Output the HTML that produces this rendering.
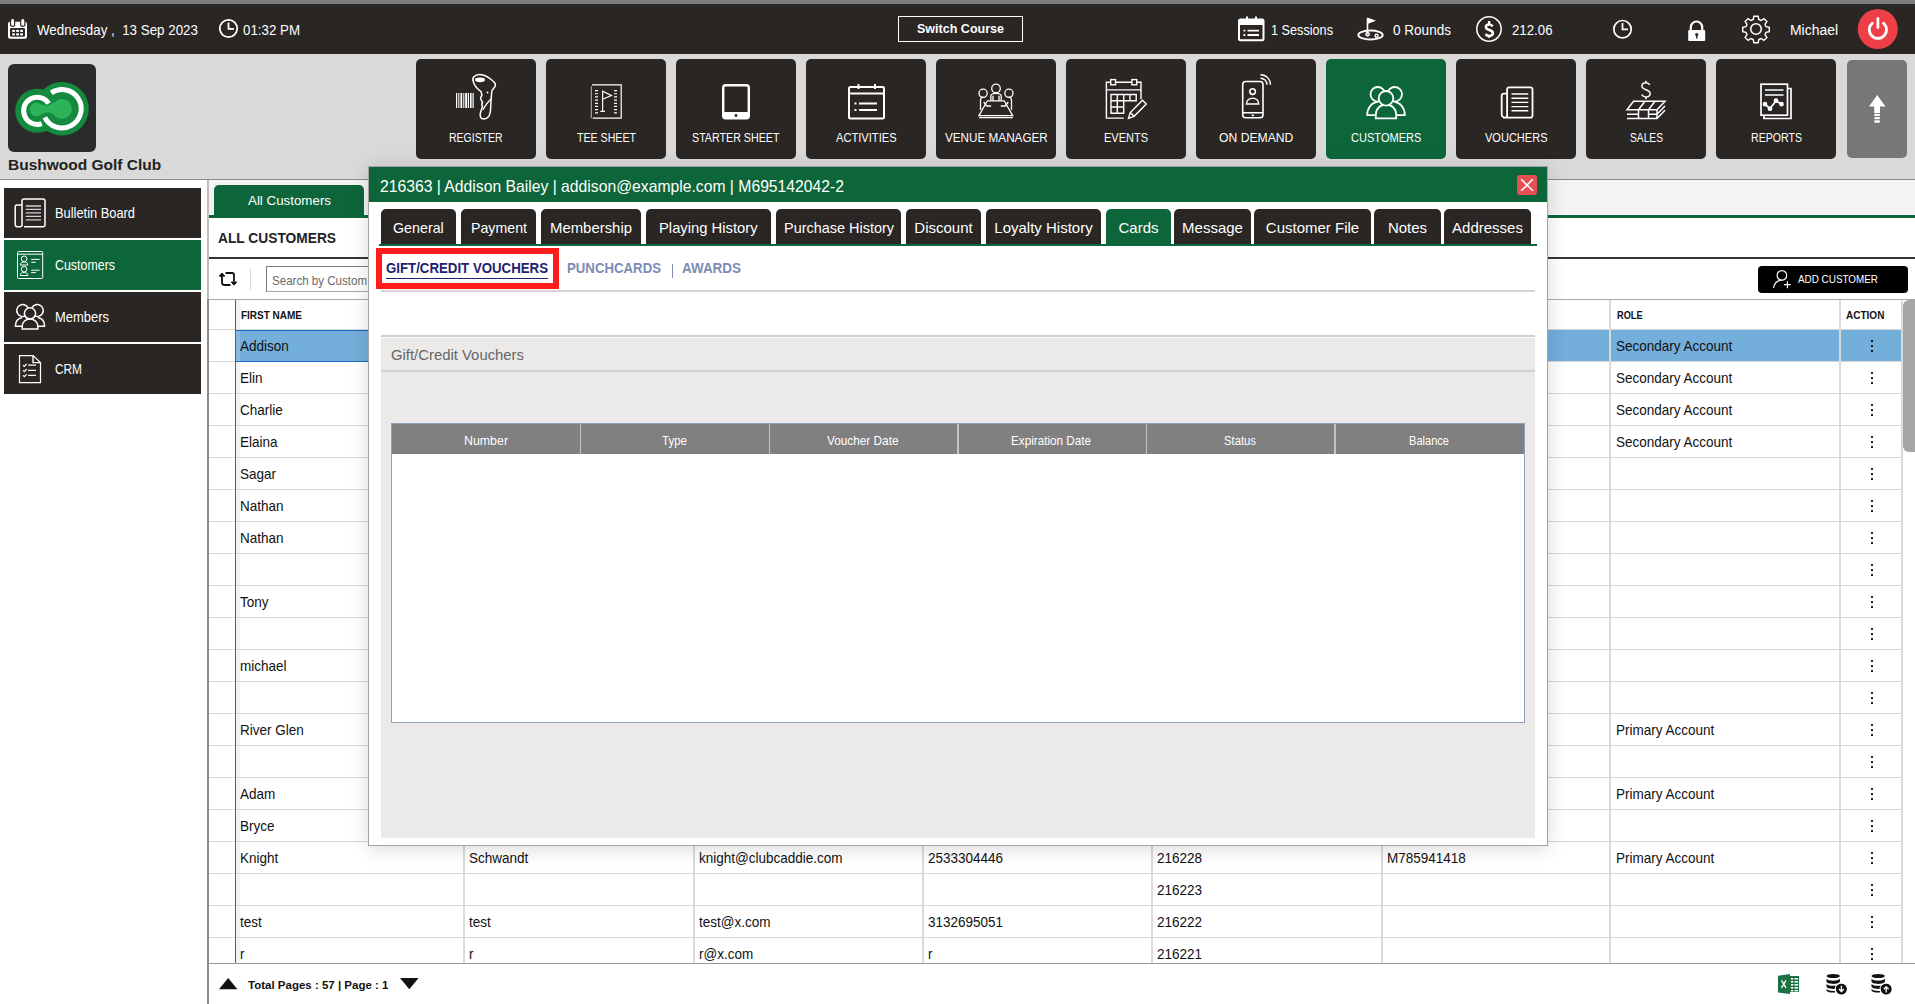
<!DOCTYPE html><html><head><meta charset='utf-8'><style>*{box-sizing:border-box;margin:0;padding:0}
html,body{width:1915px;height:1004px;overflow:hidden;background:#fff;font-family:"Liberation Sans",sans-serif}
body{position:relative}
.a{position:absolute}
.nw{white-space:pre}
.tt{position:absolute;font-size:13.5px;color:#fff;white-space:nowrap;line-height:16px}
.tile{position:absolute;width:120px;height:100px;top:59px;background:#2a2624;border-radius:5px}
.tile .lbl{position:absolute;left:0;right:0;top:73px;text-align:center;color:#fff;font-size:11.5px;letter-spacing:-0.4px;line-height:14px;white-space:nowrap}
.tile svg{position:absolute;left:0;top:0}
.sb{position:absolute;left:4px;width:197px;height:50px;background:#2a2624}
.sb .lbl{position:absolute;left:51px;top:18px;font-size:13px;color:#fff;line-height:15px;white-space:nowrap}
.sb svg{position:absolute;left:0;top:0}
.cell{position:absolute;font-size:13.5px;color:#111;white-space:nowrap;line-height:16px}
.hl{position:absolute;height:1px;background:#d4d4d4}
.vl{position:absolute;width:1px;background:#d4d4d4}
.mtab{position:absolute;top:209px;height:36px;background:#2a2624;border-radius:5px 5px 0 0;color:#fff;font-size:14.5px;line-height:18px;text-align:center;white-space:nowrap;padding-top:9px}
.th{position:absolute;top:424px;height:30px;color:#fff;font-size:12.5px;line-height:15px;text-align:center;padding-top:9px}
</style></head><body>
<div class='a' style='left:0px;top:0px;width:1915px;height:4px;background:#7d7d7d;'></div>
<div class='a' style='left:0px;top:4px;width:1915px;height:50px;background:#2a2624;'></div>
<div class='a' style='left:0px;top:54px;width:1915px;height:125px;background:#d9d9d9;'></div>
<div class='a' style='left:0px;top:179px;width:1915px;height:1px;background:#8c8c8c;'></div>
<div class='a nw' style='left:37.00px;top:16.10px;font-size:14px;line-height:28px;font-weight:400;color:#fff;transform:scaleX(0.9546);transform-origin:0 0;'>Wednesday ,  13 Sep 2023</div>
<div class='a nw' style='left:243.00px;top:16.10px;font-size:14px;line-height:28px;font-weight:400;color:#fff;transform:scaleX(0.9510);transform-origin:0 0;'>01:32 PM</div>
<div class='a' style='left:898px;top:16px;width:125px;height:26px;background:transparent;border:1.5px solid #fff'></div>
<div class='a nw' style='left:917.00px;top:16.45px;font-size:13px;line-height:26px;font-weight:700;color:#fff;transform:scaleX(0.9635);transform-origin:0 0;'>Switch Course</div>
<div class='a nw' style='left:1271.00px;top:16.10px;font-size:14px;line-height:28px;font-weight:400;color:#fff;transform:scaleX(0.9053);transform-origin:0 0;'>1 Sessions</div>
<div class='a nw' style='left:1393.00px;top:16.10px;font-size:14px;line-height:28px;font-weight:400;color:#fff;transform:scaleX(0.9677);transform-origin:0 0;'>0 Rounds</div>
<div class='a nw' style='left:1512.00px;top:16.10px;font-size:14px;line-height:28px;font-weight:400;color:#fff;transform:scaleX(0.9456);transform-origin:0 0;'>212.06</div>
<div class='a nw' style='left:1790.00px;top:16.10px;font-size:14px;line-height:28px;font-weight:400;color:#fff;transform:scaleX(0.9948);transform-origin:0 0;'>Michael</div>
<svg class="a" style="left:0;top:0" width="1915" height="54" viewBox="0 0 1915 54" fill="none" stroke="#fff">
<!-- date calendar -->
<g stroke="none">
<rect x="8" y="21.8" width="19" height="17" rx="2" fill="#fff"/>
<rect x="10" y="28" width="15" height="8.7" rx="1.2" fill="#2a2624"/>
<rect x="10.5" y="18.5" width="4.2" height="7.8" rx="2.1" fill="#fff" stroke="#2a2624" stroke-width="1.2"/>
<rect x="20.7" y="18.5" width="4.2" height="7.8" rx="2.1" fill="#fff" stroke="#2a2624" stroke-width="1.2"/>
<g fill="#fff"><rect x="12.1" y="29.7" width="2.9" height="2.4" rx=".8"/><rect x="16.1" y="29.7" width="2.9" height="2.4" rx=".8"/><rect x="20.1" y="29.7" width="2.9" height="2.4" rx=".8"/>
<rect x="12.1" y="33.2" width="2.9" height="2.4" rx=".8"/><rect x="16.1" y="33.2" width="2.9" height="2.4" rx=".8"/><rect x="20.1" y="33.2" width="2.9" height="2.4" rx=".8"/></g>
</g>
<!-- clock -->
<circle cx="228.5" cy="28.5" r="8.7" stroke-width="1.8"/>
<path d="M228.5 22.5V28.8H234" stroke-width="1.8"/>
<!-- sessions -->
<rect x="1239" y="19.5" width="24.5" height="20.8" rx="1.5" stroke-width="2"/>
<rect x="1239" y="19.5" width="24.5" height="5.5" fill="#fff" stroke="none"/>
<rect x="1246" y="16.5" width="2" height="4" fill="#fff" stroke="none"/>
<rect x="1255" y="16.5" width="2" height="4" fill="#fff" stroke="none"/>
<path d="M1243.5 30.7h1.8M1247.5 30.7h11.5M1243.5 35h1.8M1247.5 35h11.5" stroke-width="1.8"/>
<!-- golf -->
<path d="M1367.5 34.5V18" stroke-width="1.6"/>
<path d="M1367.5 17.5l8.5 3.3-8.5 3.3z" fill="#fff" stroke="none"/>
<ellipse cx="1370.5" cy="35" rx="12.2" ry="4.5" stroke-width="1.9"/>
<circle cx="1367.6" cy="34.3" r="1.7" stroke-width="1.4"/>
<circle cx="1376.6" cy="35.8" r="1.5" stroke-width="1.4"/>
<!-- dollar -->
<circle cx="1489" cy="29" r="12.2" stroke-width="1.5"/>
<path d="M1492.6 26.4c-.7-1.3-1.8-1.9-3.4-1.9-2 0-3.3 1-3.3 2.5 0 3.7 7 2.3 7 6.1 0 1.6-1.4 2.8-3.6 2.8-1.8 0-3-.7-3.7-1.9" stroke-width="2.5"/><path d="M1489.1 21v3M1489.1 35.8v2" stroke-width="2.3"/>
<!-- clock2 -->
<circle cx="1622.5" cy="29.2" r="8.7" stroke-width="1.7"/>
<path d="M1622.5 23V29.4H1628" stroke-width="1.7"/>
<!-- lock -->
<path d="M1690.8 30.5v-3.3a5.7 5.7 0 0 1 11.4 0v3.3" stroke-width="2.2"/>
<rect x="1688.2" y="30" width="17" height="11" rx="1" fill="#fff" stroke="none"/>
<circle cx="1696.7" cy="34.5" r="1.6" fill="#2a2624" stroke="none"/>
<rect x="1696" y="35" width="1.5" height="3.5" fill="#2a2624" stroke="none"/>
<!-- gear -->
<path id="gear" stroke-width="1.4" d="M1753.9 16.2h4.2l0.7 3.3 2.3 1 2.8-1.9 3 3-1.9 2.8 1 2.3 3.3 0.7v4.2l-3.3 0.7-1 2.3 1.9 2.8-3 3-2.8-1.9-2.3 1-0.7 3.3h-4.2l-0.7-3.3-2.3-1-2.8 1.9-3-3 1.9-2.8-1-2.3-3.3-0.7v-4.2l3.3-0.7 1-2.3-1.9-2.8 3-3 2.8 1.9 2.3-1z"/>
<circle cx="1756" cy="29" r="5.3" stroke-width="1.6"/>
<!-- power -->
<circle cx="1877.8" cy="29" r="20" fill="#ee3f46" stroke="none"/>
<path d="M1872.3 23.3a8.6 8.6 0 1 0 11.2 0" stroke-width="2.8" stroke-linecap="round"/>
<path d="M1877.9 18.5v9" stroke-width="2.8" stroke-linecap="round"/>
</svg>

<div class='a' style='left:8px;top:64px;width:88px;height:88px;background:#2c2b2b;border-radius:6px'></div>
<svg class="a" style="left:0;top:54px" width="110" height="110" viewBox="0 54 110 110">
<circle cx="37.2" cy="110.8" r="22" fill="#148a3f"/>
<circle cx="62" cy="108.8" r="26.8" fill="#148a3f"/>
<path d="M51.26 92.88A19.2 19.2 0 1 1 44.8 117.3" fill="none" stroke="#fff" stroke-width="5"/>
<path d="M48.67 103.49A13.6 13.6 0 1 0 41.72 123.63" fill="none" stroke="#fff" stroke-width="5"/>
<g fill="#2db35a">
<circle cx="62" cy="109" r="10"/>
<circle cx="36.5" cy="109.5" r="6.8"/>
<path d="M38 103 C44 106 48 107 54 102 L56 116 C50 111 44 112 38 116 Z"/>
</g>
</svg>

<div class='a nw' style='left:8.00px;top:149.07px;font-size:15.5px;line-height:31.0px;font-weight:700;color:#222;'>Bushwood Golf Club</div>
<div class='a' style='left:416px;top:59px;width:120px;height:100px;background:#2a2624;border-radius:5px'></div>
<div class='a nw' style='left:449.20px;top:126.12px;font-size:12.5px;line-height:25.0px;font-weight:400;color:#fff;transform:scaleX(0.8387);transform-origin:0 0;'>REGISTER</div>
<div class='a' style='left:546px;top:59px;width:120px;height:100px;background:#2a2624;border-radius:5px'></div>
<div class='a nw' style='left:576.50px;top:126.12px;font-size:12.5px;line-height:25.0px;font-weight:400;color:#fff;transform:scaleX(0.8493);transform-origin:0 0;'>TEE SHEET</div>
<div class='a' style='left:676px;top:59px;width:120px;height:100px;background:#2a2624;border-radius:5px'></div>
<div class='a nw' style='left:692.25px;top:126.12px;font-size:12.5px;line-height:25.0px;font-weight:400;color:#fff;transform:scaleX(0.8550);transform-origin:0 0;'>STARTER SHEET</div>
<div class='a' style='left:806px;top:59px;width:120px;height:100px;background:#2a2624;border-radius:5px'></div>
<div class='a nw' style='left:835.70px;top:126.12px;font-size:12.5px;line-height:25.0px;font-weight:400;color:#fff;transform:scaleX(0.8902);transform-origin:0 0;'>ACTIVITIES</div>
<div class='a' style='left:936px;top:59px;width:120px;height:100px;background:#2a2624;border-radius:5px'></div>
<div class='a nw' style='left:944.60px;top:126.12px;font-size:12.5px;line-height:25.0px;font-weight:400;color:#fff;transform:scaleX(0.9367);transform-origin:0 0;'>VENUE MANAGER</div>
<div class='a' style='left:1066px;top:59px;width:120px;height:100px;background:#2a2624;border-radius:5px'></div>
<div class='a nw' style='left:1104.00px;top:126.12px;font-size:12.5px;line-height:25.0px;font-weight:400;color:#fff;transform:scaleX(0.8797);transform-origin:0 0;'>EVENTS</div>
<div class='a' style='left:1196px;top:59px;width:120px;height:100px;background:#2a2624;border-radius:5px'></div>
<div class='a nw' style='left:1218.80px;top:126.12px;font-size:12.5px;line-height:25.0px;font-weight:400;color:#fff;transform:scaleX(0.9737);transform-origin:0 0;'>ON DEMAND</div>
<div class='a' style='left:1326px;top:59px;width:120px;height:100px;background:#0d663a;border-radius:5px'></div>
<div class='a nw' style='left:1350.80px;top:126.12px;font-size:12.5px;line-height:25.0px;font-weight:400;color:#fff;transform:scaleX(0.8840);transform-origin:0 0;'>CUSTOMERS</div>
<div class='a' style='left:1456px;top:59px;width:120px;height:100px;background:#2a2624;border-radius:5px'></div>
<div class='a nw' style='left:1484.75px;top:126.12px;font-size:12.5px;line-height:25.0px;font-weight:400;color:#fff;transform:scaleX(0.8822);transform-origin:0 0;'>VOUCHERS</div>
<div class='a' style='left:1586px;top:59px;width:120px;height:100px;background:#2a2624;border-radius:5px'></div>
<div class='a nw' style='left:1629.50px;top:126.12px;font-size:12.5px;line-height:25.0px;font-weight:400;color:#fff;transform:scaleX(0.8186);transform-origin:0 0;'>SALES</div>
<div class='a' style='left:1716px;top:59px;width:120px;height:100px;background:#2a2624;border-radius:5px'></div>
<div class='a nw' style='left:1750.50px;top:126.12px;font-size:12.5px;line-height:25.0px;font-weight:400;color:#fff;transform:scaleX(0.8471);transform-origin:0 0;'>REPORTS</div>
<div class='a' style='left:1847px;top:60px;width:60px;height:98px;background:#777777;border-radius:5px'></div>
<svg class="a" style="left:0;top:54px" width="1915" height="110" viewBox="0 54 1915 110" fill="none" stroke="#fff" stroke-width="1.6">
<!-- register -->
<g fill="#fff" stroke="none">
<rect x="456" y="93" width="1.2" height="15"/><rect x="458.3" y="93" width="1" height="15"/><rect x="460.4" y="93" width="1.8" height="15"/>
<rect x="463.3" y="93" width="1" height="15"/><rect x="465.2" y="93" width="2" height="15"/><rect x="468" y="93" width="1" height="15"/>
<rect x="470" y="93" width="1.6" height="15"/><rect x="472.5" y="93" width="1.2" height="15"/>
</g>
<path d="M473.5 82c-2-4 1-7.5 6-7.5 5 0 10 3 15 8 1.5 2 1 4-1 6l-1.5 2c-1 6-1 14-1.5 20-.5 5-3 8.5-6.5 8.5-3.5 0-4.5-3-3.5-6.5l2-6c-1-2-1-3 0-4l-1.5-3c-1-1 0-3 1-4l-1-4c-3-2-6-5-7.5-9z" stroke-width="1.5"/>
<ellipse cx="480" cy="79.8" rx="5" ry="2.4" fill="#fff" stroke="none"/>
<path d="M483 110c2-5 5-8 8-11" stroke-width="1.3"/>
<circle cx="487.5" cy="92.5" r="1" fill="#fff" stroke="none"/>
<!-- tee sheet -->
<path d="M592 84.8h29.2v33.4h-28.5" stroke-width="1.2"/>
<path d="M591.3 86.2v32" stroke-width="1" stroke="#bdbdbd"/>
<path d="M595 90.60h3M614 90.60h3M595 93.77h3M614 93.77h3M595 96.94h3M614 96.94h3M595 100.11h3M614 100.11h3M595 103.28h3M614 103.28h3M595 106.45h3M614 106.45h3M595 109.62h3M614 109.62h3M595 112.79h3M614 112.79h3" stroke-width="1.2"/>
<path d="M602.6 111.3V91.3l8.8 4.2-8.8 3.8M600.3 111.4h4.7" stroke-width="1.2"/>
<!-- starter sheet -->
<rect x="723.2" y="85.2" width="25.6" height="33" rx="2.5" stroke-width="2.4"/>
<rect x="723" y="112" width="26" height="7" rx="1.5" fill="#fff" stroke="none"/>
<circle cx="736" cy="115.5" r="1.4" fill="#2a2624" stroke="none"/>
<!-- activities -->
<rect x="849" y="87" width="35" height="31.5" rx="1.5" stroke-width="2"/>
<path d="M849 93.5h35" stroke-width="2"/>
<path d="M858.5 84v5M875 84v5" stroke-width="2"/>
<path d="M854.5 103.5h2M859 103.5h18M854.5 110h2M859 110h18" stroke-width="2"/>
<!-- venue manager -->
<g stroke-width="1.3">
<circle cx="996" cy="88.4" r="4.3"/><circle cx="983.1" cy="93.3" r="4.1"/><circle cx="1008.9" cy="93.3" r="4.1"/>
<path d="M990.8 100.8v-4.5c0-1.8 2.3-3 5.2-3s5.2 1.2 5.2 3v4.5M993 100.8v-5M999 100.8v-5"/>
<path d="M987.4 100.8h16.8l8.5 14.8h-33.8z"/>
<path d="M979.2 117.6h33.6"/>
<path d="M980.5 110V101c0-2.2 1.2-3.8 2.8-3.8M991.2 106h-4.5l-3-4"/>
<path d="M1011.5 110V101c0-2.2-1.2-3.8-2.8-3.8M1000.8 106h4.5l3-4"/>
</g>
<!-- events -->
<g stroke-width="1.4">
<path d="M1141 99.3V82.3h-34.6v35.8h17.4"/>
<path d="M1106.4 89.9h34.6"/>
<rect x="1110.7" y="79.6" width="4.8" height="5.2" fill="#2a2624"/><rect x="1131.9" y="79.6" width="4.8" height="5.2" fill="#2a2624"/>
<path d="M1111 94.5h25.2v6.3h-25.2zM1111 100.8v12.4h12.7v-12.4M1111 107h12.7M1117.3 94.5v18.7M1123.7 94.5v6.3M1130 94.5v6.3"/>
<path d="M1128.5 118.3l1.8-5.8 12.2-12.2 3.8 3.8-12.2 12.2z M1130.3 112.5l4 4"/>
</g>
<!-- on demand -->
<g stroke-width="1.6">
<rect x="1242.7" y="81.5" width="20.3" height="36.3" rx="3"/>
<path d="M1242.7 112.7h20.3M1251.8 115.4h2"/>
<circle cx="1252.6" cy="91.6" r="2.8"/>
<path d="M1246.5 104c0-3.6 2.6-5.8 6.1-5.8s6.1 2.2 6.1 5.8z"/>
<path d="M1260.5 78.2a6.5 6.5 0 0 1 6.5 6.5M1260.5 74.7a10 10 0 0 1 10 10" stroke-width="1.4"/>
</g>
<!-- customers -->
<g stroke-width="1.8" fill="#0d663a">
<path d="M1378 115.2h-10.8c0-7 4-12.3 10.5-13.5"/>
<path d="M1394 115.2h10.8c0-7-4-12.3-10.5-13.5"/>
<circle cx="1377.8" cy="94.3" r="7.3"/>
<circle cx="1394.7" cy="94.3" r="7.3"/>
<path d="M1375.8 118.3v-3.5c0-6 4.5-10.3 10.2-10.3s10.2 4.3 10.2 10.3v3.5z"/>
<circle cx="1386" cy="98.3" r="7.3"/>
</g>
<!-- vouchers -->
<g stroke-width="1.8">
<path d="M1503 117.6h27.3c1.3 0 2.2-.9 2.2-2.2v-25.9c0-1.3-.9-2.2-2.2-2.2h-21c-1.3 0-2.2.9-2.2 2.2v26c0 1.2-.9 2.1-2.1 2.1s-3.3-1-3.3-3v-18.6c0-1.4.9-2.3 2.3-2.3h3"/>
<path d="M1511.5 94h16.8M1511.5 98.2h16.8M1511.5 102.4h16.8M1511.5 106.6h16.8M1511.5 110.8h16.8" stroke-width="1.4"/>
</g>
<!-- sales -->
<g stroke-width="1.5">
<path d="M1649.8 85c-.8-1.5-2.2-2.3-3.9-2.3-2.4 0-4 1.3-4 3.2 0 4.6 8.3 3.1 8.3 7.7 0 2-1.7 3.4-4.2 3.4-1.9 0-3.4-.8-4.4-2.3M1645.9 80.8v2M1645.9 96.9v2.3"/>
<path d="M1627 109.7l6.5-8.4h31.5l-8 8.4zM1638.5 109.7l6.5-8.4M1648.5 109.7l6.5-8.4"/>
<path d="M1627 114.2h11.5M1648.5 114.2h8.5l8-8.2M1627 118.5h30l8-8.2M1638.5 109.7v8.8M1648.5 109.7v8.8M1657 109.7v8.8"/>
</g>
<!-- reports -->
<g stroke-width="1.7">
<rect x="1761" y="84.2" width="26.5" height="31"/>
<path d="M1787.5 88.5h3.5v30h-27v-3"/>
<path d="M1765 89.9h18.5M1765 94.9h18.5" stroke-width="1.5"/>
<path d="M1765 104.2l5 4.5 6-8 5.5 3.5"/>
<circle cx="1765" cy="104.2" r="1.5" fill="#fff"/><circle cx="1770" cy="108.7" r="1.5" fill="#fff"/><circle cx="1776" cy="100.7" r="1.5" fill="#fff"/><circle cx="1781.5" cy="104.2" r="1.5" fill="#fff"/>
</g>
<!-- up arrow -->
<g fill="#fff" stroke="none">
<path d="M1869 106.5L1877.2 95 1885.5 106.5h-5.5v6.5h-5.8v-6.5z"/>
<rect x="1874.2" y="113.8" width="5.8" height="2.2" rx="1"/>
<rect x="1874.2" y="117" width="5.8" height="2.2" rx="1"/>
<rect x="1874.2" y="120.2" width="5.8" height="2.6" rx="1.3"/>
</g>
</svg>

<div class='a' style='left:4px;top:188px;width:197px;height:50px;background:#2a2624;'></div>
<div class='a nw' style='left:55.00px;top:198.73px;font-size:14.5px;line-height:29.0px;font-weight:400;color:#fff;transform:scaleX(0.8861);transform-origin:0 0;'>Bulletin Board</div>
<div class='a' style='left:4px;top:240px;width:197px;height:50px;background:#0d663a;'></div>
<div class='a nw' style='left:55.00px;top:250.73px;font-size:14.5px;line-height:29.0px;font-weight:400;color:#fff;transform:scaleX(0.8558);transform-origin:0 0;'>Customers</div>
<div class='a' style='left:4px;top:292px;width:197px;height:50px;background:#2a2624;'></div>
<div class='a nw' style='left:55.00px;top:302.73px;font-size:14.5px;line-height:29.0px;font-weight:400;color:#fff;transform:scaleX(0.8935);transform-origin:0 0;'>Members</div>
<div class='a' style='left:4px;top:344px;width:197px;height:50px;background:#2a2624;'></div>
<div class='a nw' style='left:55.00px;top:354.73px;font-size:14.5px;line-height:29.0px;font-weight:400;color:#fff;transform:scaleX(0.8174);transform-origin:0 0;'>CRM</div>
<svg class="a" style="left:0;top:180px" width="210" height="220" viewBox="0 180 210 220" fill="none" stroke="#fff">
<!-- bulletin -->
<path d="M24 226.8h19c1.2 0 2-.8 2-2v-23.8c0-1.2-.8-2-2-2h-19c-1.2 0-2 .8-2 2v23.8c0 1.2-.8 2-2 2h-2.5c-1.3 0-2.3-1-2.3-2.3v-17.5c0-1.2 .8-2 2-2h4.5" stroke-width="1.5"/>
<path d="M25.8 206h15.2M25.8 209.4h15.2M25.8 212.9h15.2M25.8 216.3h15.2M25.8 219.8h15.2" stroke-width="1.3" stroke="#d0d0d0"/>
<!-- customers card -->
<g stroke-width="1">
<rect x="17.5" y="251.5" width="25.2" height="27" rx="1"/>
<path d="M17.5 254.2h25.2"/>
<circle cx="24.1" cy="258.8" r="2.8"/><path d="M20.3 265c0-2 1.6-3 3.8-3s3.8 1 3.8 3z"/>
<circle cx="24.1" cy="269.2" r="2.8"/><path d="M20.3 275.5c0-2 1.6-3 3.8-3s3.8 1 3.8 3z"/>
<path d="M31.2 259.4h8.4M31.2 262.3h4.6M31.2 270.2h8.4M31.2 272.6h4.6"/>
</g>
<!-- members -->
<g stroke-width="1.5">
<path d="M26 315.6a6 6 0 1 1 2-8"/>
<path d="M34 315.6a6 6 0 1 0-2-8"/>
<circle cx="30" cy="313.4" r="5.6"/>
<path d="M22 317.5c-4 1-6.5 3.5-6.5 8v0.7h6.5"/>
<path d="M38 317.5c4 1 6.5 3.5 6.5 8v0.7h-6.5"/>
<path d="M22.2 329v-2.5c0-4.5 3.5-7.5 7.8-7.5s7.8 3 7.8 7.5v2.5z"/>
</g>
<!-- crm -->
<g stroke-width="1.2">
<path d="M19.5 355.6h13.5l7.5 7v20h-21z"/>
<path d="M33 355.6v7h7.5" stroke-width="1.4"/>
<path d="M23 365.2l1.3 1.3 2.4-2.6M28.1 365.2h7.8M23 370.3l1.3 1.3 2.4-2.6M28.1 370.3h7.8M23 375.4l1.3 1.3 2.4-2.6M28.1 375.4h7.8"/>
</g>
</svg>

<div class='a' style='left:207px;top:180px;width:2px;height:120px;background:#bdbdbd;'></div>
<div class='a' style='left:207px;top:299px;width:2px;height:705px;background:#8a8a8a;'></div>
<div class='a' style='left:209px;top:180px;width:1706px;height:34px;background:#f3f3f3;'></div>
<div class='a' style='left:214px;top:185px;width:150px;height:31px;background:#0d663a;border-radius:5px 5px 0 0'></div>
<div class='a nw' style='left:247.50px;top:186.78px;font-size:13.5px;line-height:27.0px;font-weight:400;color:#fff;transform:scaleX(0.9877);transform-origin:0 0;'>All Customers</div>
<div class='a' style='left:209px;top:215px;width:1706px;height:3px;background:#0d663a;'></div>
<div class='a nw' style='left:218.00px;top:224.43px;font-size:14.5px;line-height:29.0px;font-weight:700;color:#222;transform:scaleX(0.9490);transform-origin:0 0;'>ALL CUSTOMERS</div>
<div class='a' style='left:209px;top:257px;width:1706px;height:2px;background:#353535;'></div>
<div class='a' style='left:250px;top:268px;width:1px;height:22px;background:#d8d8d8;'></div>
<div class='a' style='left:266px;top:266px;width:200px;height:26px;background:#fff;border:1px solid #a8a8a8;border-top-color:#7a7a7a;border-left-color:#7a7a7a'></div>
<div class='a nw' style='left:272.00px;top:267.72px;font-size:12.8px;line-height:25.6px;font-weight:400;color:#6a6a6a;transform:scaleX(0.9025);transform-origin:0 0;'>Search by Custom</div>
<div class='a' style='left:1758px;top:266px;width:150px;height:27px;background:#000;border-radius:4px'></div>
<div class='a nw' style='left:1798.00px;top:268.82px;font-size:10.5px;line-height:21.0px;font-weight:400;color:#fff;transform:scaleX(0.9413);transform-origin:0 0;'>ADD CUSTOMER</div>
<div class='a' style='left:209px;top:299px;width:1706px;height:1px;background:#a9a9a9;'></div>
<div class='a' style='left:236px;top:300px;width:4px;height:663px;background:#f2f2f2;'></div>
<div class='a' style='left:236px;top:330px;width:1665px;height:32px;background:#74aedb;'></div>
<div class='a' style='left:236px;top:331px;width:4px;height:30px;background:#88b8de;'></div>
<div class='a' style='left:209px;top:329px;width:1692px;height:1px;background:#d6d6d6;'></div>
<div class='a' style='left:209px;top:361px;width:1692px;height:1px;background:#d6d6d6;'></div>
<div class='a' style='left:209px;top:393px;width:1692px;height:1px;background:#d6d6d6;'></div>
<div class='a' style='left:209px;top:425px;width:1692px;height:1px;background:#d6d6d6;'></div>
<div class='a' style='left:209px;top:457px;width:1692px;height:1px;background:#d6d6d6;'></div>
<div class='a' style='left:209px;top:489px;width:1692px;height:1px;background:#d6d6d6;'></div>
<div class='a' style='left:209px;top:521px;width:1692px;height:1px;background:#d6d6d6;'></div>
<div class='a' style='left:209px;top:553px;width:1692px;height:1px;background:#d6d6d6;'></div>
<div class='a' style='left:209px;top:585px;width:1692px;height:1px;background:#d6d6d6;'></div>
<div class='a' style='left:209px;top:617px;width:1692px;height:1px;background:#d6d6d6;'></div>
<div class='a' style='left:209px;top:649px;width:1692px;height:1px;background:#d6d6d6;'></div>
<div class='a' style='left:209px;top:681px;width:1692px;height:1px;background:#d6d6d6;'></div>
<div class='a' style='left:209px;top:713px;width:1692px;height:1px;background:#d6d6d6;'></div>
<div class='a' style='left:209px;top:745px;width:1692px;height:1px;background:#d6d6d6;'></div>
<div class='a' style='left:209px;top:777px;width:1692px;height:1px;background:#d6d6d6;'></div>
<div class='a' style='left:209px;top:809px;width:1692px;height:1px;background:#d6d6d6;'></div>
<div class='a' style='left:209px;top:841px;width:1692px;height:1px;background:#d6d6d6;'></div>
<div class='a' style='left:209px;top:873px;width:1692px;height:1px;background:#d6d6d6;'></div>
<div class='a' style='left:209px;top:905px;width:1692px;height:1px;background:#d6d6d6;'></div>
<div class='a' style='left:209px;top:937px;width:1692px;height:1px;background:#d6d6d6;'></div>
<div class='a' style='left:463px;top:300px;width:1.6px;height:663px;background:#dadada;'></div>
<div class='a' style='left:693px;top:300px;width:1.6px;height:663px;background:#dadada;'></div>
<div class='a' style='left:922px;top:300px;width:1.6px;height:663px;background:#dadada;'></div>
<div class='a' style='left:1151px;top:300px;width:1.6px;height:663px;background:#dadada;'></div>
<div class='a' style='left:1381px;top:300px;width:1.6px;height:663px;background:#dadada;'></div>
<div class='a' style='left:1609px;top:300px;width:1.6px;height:663px;background:#dadada;'></div>
<div class='a' style='left:1839px;top:300px;width:1.6px;height:663px;background:#dadada;'></div>
<div class='a' style='left:1901px;top:300px;width:1.6px;height:663px;background:#dadada;'></div>
<div class='a' style='left:235px;top:300px;width:1px;height:663px;background:#1a6cc4;'></div>
<div class='a' style='left:236px;top:330px;width:227px;height:1px;background:#1a6cc4;'></div>
<div class='a' style='left:236px;top:361px;width:227px;height:1px;background:#1a6cc4;'></div>
<div class='a' style='left:463px;top:330px;width:1px;height:32px;background:#1a6cc4;'></div>
<div class='a nw' style='left:241.00px;top:304.82px;font-size:10.5px;line-height:21.0px;font-weight:700;color:#111;transform:scaleX(0.9506);transform-origin:0 0;'>FIRST NAME</div>
<div class='a nw' style='left:1616.50px;top:304.82px;font-size:10.5px;line-height:21.0px;font-weight:700;color:#111;transform:scaleX(0.8776);transform-origin:0 0;'>ROLE</div>
<div class='a nw' style='left:1846.00px;top:304.82px;font-size:10.5px;line-height:21.0px;font-weight:700;color:#111;transform:scaleX(0.9540);transform-origin:0 0;'>ACTION</div>
<div class='a nw' style='left:240.00px;top:331.69px;font-size:14.3px;line-height:28.6px;font-weight:400;color:#111;transform:scaleX(0.9444);transform-origin:0 0;'>Addison</div>
<div class='a nw' style='left:1616.00px;top:331.69px;font-size:14.3px;line-height:28.6px;font-weight:400;color:#111;transform:scaleX(0.9442);transform-origin:0 0;'>Secondary Account</div>
<div class='a' style='left:1870.8px;top:339.5px;width:2.2px;height:2.2px;background:#000;border-radius:0.4px'></div>
<div class='a' style='left:1870.8px;top:344.5px;width:2.2px;height:2.2px;background:#000;border-radius:0.4px'></div>
<div class='a' style='left:1870.8px;top:349.5px;width:2.2px;height:2.2px;background:#000;border-radius:0.4px'></div>
<div class='a nw' style='left:240.00px;top:363.69px;font-size:14.3px;line-height:28.6px;font-weight:400;color:#111;transform:scaleX(0.9443);transform-origin:0 0;'>Elin</div>
<div class='a nw' style='left:1616.00px;top:363.69px;font-size:14.3px;line-height:28.6px;font-weight:400;color:#111;transform:scaleX(0.9442);transform-origin:0 0;'>Secondary Account</div>
<div class='a' style='left:1870.8px;top:371.5px;width:2.2px;height:2.2px;background:#000;border-radius:0.4px'></div>
<div class='a' style='left:1870.8px;top:376.5px;width:2.2px;height:2.2px;background:#000;border-radius:0.4px'></div>
<div class='a' style='left:1870.8px;top:381.5px;width:2.2px;height:2.2px;background:#000;border-radius:0.4px'></div>
<div class='a nw' style='left:240.00px;top:395.69px;font-size:14.3px;line-height:28.6px;font-weight:400;color:#111;transform:scaleX(0.9445);transform-origin:0 0;'>Charlie</div>
<div class='a nw' style='left:1616.00px;top:395.69px;font-size:14.3px;line-height:28.6px;font-weight:400;color:#111;transform:scaleX(0.9442);transform-origin:0 0;'>Secondary Account</div>
<div class='a' style='left:1870.8px;top:403.5px;width:2.2px;height:2.2px;background:#000;border-radius:0.4px'></div>
<div class='a' style='left:1870.8px;top:408.5px;width:2.2px;height:2.2px;background:#000;border-radius:0.4px'></div>
<div class='a' style='left:1870.8px;top:413.5px;width:2.2px;height:2.2px;background:#000;border-radius:0.4px'></div>
<div class='a nw' style='left:240.00px;top:427.69px;font-size:14.3px;line-height:28.6px;font-weight:400;color:#111;transform:scaleX(0.9442);transform-origin:0 0;'>Elaina</div>
<div class='a nw' style='left:1616.00px;top:427.69px;font-size:14.3px;line-height:28.6px;font-weight:400;color:#111;transform:scaleX(0.9442);transform-origin:0 0;'>Secondary Account</div>
<div class='a' style='left:1870.8px;top:435.5px;width:2.2px;height:2.2px;background:#000;border-radius:0.4px'></div>
<div class='a' style='left:1870.8px;top:440.5px;width:2.2px;height:2.2px;background:#000;border-radius:0.4px'></div>
<div class='a' style='left:1870.8px;top:445.5px;width:2.2px;height:2.2px;background:#000;border-radius:0.4px'></div>
<div class='a nw' style='left:240.00px;top:459.69px;font-size:14.3px;line-height:28.6px;font-weight:400;color:#111;transform:scaleX(0.9443);transform-origin:0 0;'>Sagar</div>
<div class='a' style='left:1870.8px;top:467.5px;width:2.2px;height:2.2px;background:#000;border-radius:0.4px'></div>
<div class='a' style='left:1870.8px;top:472.5px;width:2.2px;height:2.2px;background:#000;border-radius:0.4px'></div>
<div class='a' style='left:1870.8px;top:477.5px;width:2.2px;height:2.2px;background:#000;border-radius:0.4px'></div>
<div class='a nw' style='left:240.00px;top:491.69px;font-size:14.3px;line-height:28.6px;font-weight:400;color:#111;transform:scaleX(0.9444);transform-origin:0 0;'>Nathan</div>
<div class='a' style='left:1870.8px;top:499.5px;width:2.2px;height:2.2px;background:#000;border-radius:0.4px'></div>
<div class='a' style='left:1870.8px;top:504.5px;width:2.2px;height:2.2px;background:#000;border-radius:0.4px'></div>
<div class='a' style='left:1870.8px;top:509.5px;width:2.2px;height:2.2px;background:#000;border-radius:0.4px'></div>
<div class='a nw' style='left:240.00px;top:523.70px;font-size:14.3px;line-height:28.6px;font-weight:400;color:#111;transform:scaleX(0.9444);transform-origin:0 0;'>Nathan</div>
<div class='a' style='left:1870.8px;top:531.5px;width:2.2px;height:2.2px;background:#000;border-radius:0.4px'></div>
<div class='a' style='left:1870.8px;top:536.5px;width:2.2px;height:2.2px;background:#000;border-radius:0.4px'></div>
<div class='a' style='left:1870.8px;top:541.5px;width:2.2px;height:2.2px;background:#000;border-radius:0.4px'></div>
<div class='a' style='left:1870.8px;top:563.5px;width:2.2px;height:2.2px;background:#000;border-radius:0.4px'></div>
<div class='a' style='left:1870.8px;top:568.5px;width:2.2px;height:2.2px;background:#000;border-radius:0.4px'></div>
<div class='a' style='left:1870.8px;top:573.5px;width:2.2px;height:2.2px;background:#000;border-radius:0.4px'></div>
<div class='a nw' style='left:240.00px;top:587.70px;font-size:14.3px;line-height:28.6px;font-weight:400;color:#111;transform:scaleX(0.9446);transform-origin:0 0;'>Tony</div>
<div class='a' style='left:1870.8px;top:595.5px;width:2.2px;height:2.2px;background:#000;border-radius:0.4px'></div>
<div class='a' style='left:1870.8px;top:600.5px;width:2.2px;height:2.2px;background:#000;border-radius:0.4px'></div>
<div class='a' style='left:1870.8px;top:605.5px;width:2.2px;height:2.2px;background:#000;border-radius:0.4px'></div>
<div class='a' style='left:1870.8px;top:627.5px;width:2.2px;height:2.2px;background:#000;border-radius:0.4px'></div>
<div class='a' style='left:1870.8px;top:632.5px;width:2.2px;height:2.2px;background:#000;border-radius:0.4px'></div>
<div class='a' style='left:1870.8px;top:637.5px;width:2.2px;height:2.2px;background:#000;border-radius:0.4px'></div>
<div class='a nw' style='left:240.00px;top:651.70px;font-size:14.3px;line-height:28.6px;font-weight:400;color:#111;transform:scaleX(0.9445);transform-origin:0 0;'>michael</div>
<div class='a' style='left:1870.8px;top:659.5px;width:2.2px;height:2.2px;background:#000;border-radius:0.4px'></div>
<div class='a' style='left:1870.8px;top:664.5px;width:2.2px;height:2.2px;background:#000;border-radius:0.4px'></div>
<div class='a' style='left:1870.8px;top:669.5px;width:2.2px;height:2.2px;background:#000;border-radius:0.4px'></div>
<div class='a' style='left:1870.8px;top:691.5px;width:2.2px;height:2.2px;background:#000;border-radius:0.4px'></div>
<div class='a' style='left:1870.8px;top:696.5px;width:2.2px;height:2.2px;background:#000;border-radius:0.4px'></div>
<div class='a' style='left:1870.8px;top:701.5px;width:2.2px;height:2.2px;background:#000;border-radius:0.4px'></div>
<div class='a nw' style='left:240.00px;top:715.70px;font-size:14.3px;line-height:28.6px;font-weight:400;color:#111;transform:scaleX(0.9443);transform-origin:0 0;'>River Glen</div>
<div class='a nw' style='left:1616.00px;top:715.70px;font-size:14.3px;line-height:28.6px;font-weight:400;color:#111;transform:scaleX(0.9443);transform-origin:0 0;'>Primary Account</div>
<div class='a' style='left:1870.8px;top:723.5px;width:2.2px;height:2.2px;background:#000;border-radius:0.4px'></div>
<div class='a' style='left:1870.8px;top:728.5px;width:2.2px;height:2.2px;background:#000;border-radius:0.4px'></div>
<div class='a' style='left:1870.8px;top:733.5px;width:2.2px;height:2.2px;background:#000;border-radius:0.4px'></div>
<div class='a' style='left:1870.8px;top:755.5px;width:2.2px;height:2.2px;background:#000;border-radius:0.4px'></div>
<div class='a' style='left:1870.8px;top:760.5px;width:2.2px;height:2.2px;background:#000;border-radius:0.4px'></div>
<div class='a' style='left:1870.8px;top:765.5px;width:2.2px;height:2.2px;background:#000;border-radius:0.4px'></div>
<div class='a nw' style='left:240.00px;top:779.70px;font-size:14.3px;line-height:28.6px;font-weight:400;color:#111;transform:scaleX(0.9444);transform-origin:0 0;'>Adam</div>
<div class='a nw' style='left:1616.00px;top:779.70px;font-size:14.3px;line-height:28.6px;font-weight:400;color:#111;transform:scaleX(0.9443);transform-origin:0 0;'>Primary Account</div>
<div class='a' style='left:1870.8px;top:787.5px;width:2.2px;height:2.2px;background:#000;border-radius:0.4px'></div>
<div class='a' style='left:1870.8px;top:792.5px;width:2.2px;height:2.2px;background:#000;border-radius:0.4px'></div>
<div class='a' style='left:1870.8px;top:797.5px;width:2.2px;height:2.2px;background:#000;border-radius:0.4px'></div>
<div class='a nw' style='left:240.00px;top:811.70px;font-size:14.3px;line-height:28.6px;font-weight:400;color:#111;transform:scaleX(0.9444);transform-origin:0 0;'>Bryce</div>
<div class='a' style='left:1870.8px;top:819.5px;width:2.2px;height:2.2px;background:#000;border-radius:0.4px'></div>
<div class='a' style='left:1870.8px;top:824.5px;width:2.2px;height:2.2px;background:#000;border-radius:0.4px'></div>
<div class='a' style='left:1870.8px;top:829.5px;width:2.2px;height:2.2px;background:#000;border-radius:0.4px'></div>
<div class='a nw' style='left:240.00px;top:843.70px;font-size:14.3px;line-height:28.6px;font-weight:400;color:#111;transform:scaleX(0.9441);transform-origin:0 0;'>Knight</div>
<div class='a nw' style='left:469.00px;top:843.70px;font-size:14.3px;line-height:28.6px;font-weight:400;color:#111;transform:scaleX(0.9443);transform-origin:0 0;'>Schwandt</div>
<div class='a nw' style='left:699.00px;top:843.70px;font-size:14.3px;line-height:28.6px;font-weight:400;color:#111;transform:scaleX(0.9442);transform-origin:0 0;'>knight@clubcaddie.com</div>
<div class='a nw' style='left:928.00px;top:843.70px;font-size:14.3px;line-height:28.6px;font-weight:400;color:#111;transform:scaleX(0.9444);transform-origin:0 0;'>2533304446</div>
<div class='a nw' style='left:1157.00px;top:843.70px;font-size:14.3px;line-height:28.6px;font-weight:400;color:#111;transform:scaleX(0.9443);transform-origin:0 0;'>216228</div>
<div class='a nw' style='left:1387.00px;top:843.70px;font-size:14.3px;line-height:28.6px;font-weight:400;color:#111;transform:scaleX(0.9442);transform-origin:0 0;'>M785941418</div>
<div class='a nw' style='left:1616.00px;top:843.70px;font-size:14.3px;line-height:28.6px;font-weight:400;color:#111;transform:scaleX(0.9443);transform-origin:0 0;'>Primary Account</div>
<div class='a' style='left:1870.8px;top:851.5px;width:2.2px;height:2.2px;background:#000;border-radius:0.4px'></div>
<div class='a' style='left:1870.8px;top:856.5px;width:2.2px;height:2.2px;background:#000;border-radius:0.4px'></div>
<div class='a' style='left:1870.8px;top:861.5px;width:2.2px;height:2.2px;background:#000;border-radius:0.4px'></div>
<div class='a nw' style='left:1157.00px;top:875.70px;font-size:14.3px;line-height:28.6px;font-weight:400;color:#111;transform:scaleX(0.9443);transform-origin:0 0;'>216223</div>
<div class='a' style='left:1870.8px;top:883.5px;width:2.2px;height:2.2px;background:#000;border-radius:0.4px'></div>
<div class='a' style='left:1870.8px;top:888.5px;width:2.2px;height:2.2px;background:#000;border-radius:0.4px'></div>
<div class='a' style='left:1870.8px;top:893.5px;width:2.2px;height:2.2px;background:#000;border-radius:0.4px'></div>
<div class='a nw' style='left:240.00px;top:907.70px;font-size:14.3px;line-height:28.6px;font-weight:400;color:#111;transform:scaleX(0.9444);transform-origin:0 0;'>test</div>
<div class='a nw' style='left:469.00px;top:907.70px;font-size:14.3px;line-height:28.6px;font-weight:400;color:#111;transform:scaleX(0.9444);transform-origin:0 0;'>test</div>
<div class='a nw' style='left:699.00px;top:907.70px;font-size:14.3px;line-height:28.6px;font-weight:400;color:#111;transform:scaleX(0.9443);transform-origin:0 0;'>test@x.com</div>
<div class='a nw' style='left:928.00px;top:907.70px;font-size:14.3px;line-height:28.6px;font-weight:400;color:#111;transform:scaleX(0.9444);transform-origin:0 0;'>3132695051</div>
<div class='a nw' style='left:1157.00px;top:907.70px;font-size:14.3px;line-height:28.6px;font-weight:400;color:#111;transform:scaleX(0.9443);transform-origin:0 0;'>216222</div>
<div class='a' style='left:1870.8px;top:915.5px;width:2.2px;height:2.2px;background:#000;border-radius:0.4px'></div>
<div class='a' style='left:1870.8px;top:920.5px;width:2.2px;height:2.2px;background:#000;border-radius:0.4px'></div>
<div class='a' style='left:1870.8px;top:925.5px;width:2.2px;height:2.2px;background:#000;border-radius:0.4px'></div>
<div class='a nw' style='left:240.00px;top:939.70px;font-size:14.3px;line-height:28.6px;font-weight:400;color:#111;transform:scaleX(0.9443);transform-origin:0 0;'>r</div>
<div class='a nw' style='left:469.00px;top:939.70px;font-size:14.3px;line-height:28.6px;font-weight:400;color:#111;transform:scaleX(0.9443);transform-origin:0 0;'>r</div>
<div class='a nw' style='left:699.00px;top:939.70px;font-size:14.3px;line-height:28.6px;font-weight:400;color:#111;transform:scaleX(0.9445);transform-origin:0 0;'>r@x.com</div>
<div class='a nw' style='left:928.00px;top:939.70px;font-size:14.3px;line-height:28.6px;font-weight:400;color:#111;transform:scaleX(0.9443);transform-origin:0 0;'>r</div>
<div class='a nw' style='left:1157.00px;top:939.70px;font-size:14.3px;line-height:28.6px;font-weight:400;color:#111;transform:scaleX(0.9443);transform-origin:0 0;'>216221</div>
<div class='a' style='left:1870.8px;top:947.5px;width:2.2px;height:2.2px;background:#000;border-radius:0.4px'></div>
<div class='a' style='left:1870.8px;top:952.5px;width:2.2px;height:2.2px;background:#000;border-radius:0.4px'></div>
<div class='a' style='left:1870.8px;top:957.5px;width:2.2px;height:2.2px;background:#000;border-radius:0.4px'></div>
<div class='a' style='left:1903px;top:300px;width:12px;height:152px;background:#a6a6a6;border-radius:6px 0 0 6px'></div>
<div class='a' style='left:209px;top:963px;width:1706px;height:1px;background:#9a9a9a;'></div>
<div class='a' style='left:209px;top:964px;width:1706px;height:40px;background:#fff;'></div>
<div class='a nw' style='left:248.00px;top:974.48px;font-size:11.5px;line-height:23.0px;font-weight:700;color:#111;'>Total Pages : 57 | Page : 1</div>
<svg class="a" style="left:0;top:0" width="1915" height="1004" viewBox="0 0 1915 1004" fill="none" stroke="#111">
<!-- refresh -->
<g stroke-width="1.8" stroke="#111">
<path d="M222 276v6.5c0 1.5 1 2.5 2.5 2.5h6"/>
<path d="M225.5 273h6.5c1.3 0 2 .8 2 2v6.5"/>
</g>
<path d="M219.2 276.2L222 273l2.8 3.2z" fill="#111" stroke="#111" stroke-width="1"/>
<path d="M231.2 282L234 285.2l2.8-3.2z" fill="#111" stroke="#111" stroke-width="1"/>
<!-- add customer icon -->
<g stroke="#fff" stroke-width="1.2">
<circle cx="1781.9" cy="275.4" r="4.8"/>
<path d="M1773.6 288c.5-4.5 3.5-7.5 8-8"/>
<path d="M1787.4 281.2v7M1783.9 284.7h7"/>
</g>
<!-- pagination triangles -->
<path d="M219 989.2L228.2 978 237.4 989.2z" fill="#111" stroke="none"/>
<path d="M400 978L418.6 978 409.3 989.2z" fill="#111" stroke="none"/>
<!-- excel -->
<path d="M1778 975.8L1790 974v20l-12-1.6z" fill="#1d7044" stroke="none"/>
<rect x="1790" y="976" width="9" height="16" fill="#1d7044" stroke="none"/>
<g fill="#fff" stroke="none">
<rect x="1791" y="978" width="2.3" height="1.6"/><rect x="1794.5" y="978" width="3.5" height="1.6"/>
<rect x="1791" y="981" width="2.3" height="1.6"/><rect x="1794.5" y="981" width="3.5" height="1.6"/>
<rect x="1791" y="984" width="2.3" height="1.6"/><rect x="1794.5" y="984" width="3.5" height="1.6"/>
<rect x="1791" y="987" width="2.3" height="1.6"/><rect x="1794.5" y="987" width="3.5" height="1.6"/>
<rect x="1791" y="990" width="2.3" height="1.4"/><rect x="1794.5" y="990" width="3.5" height="1.4"/>
</g>
<path d="M1781.5 980.3l4.5 7.5M1786 980.3l-4.5 7.5" stroke="#fff" stroke-width="1.3"/>
<!-- db down -->
<g fill="#111" stroke="none">
<ellipse cx="1833.2" cy="976" rx="6.7" ry="2.1"/>
<path d="M1826.5 978.3c0 1.3 3 2.4 6.7 2.4s6.7-1.1 6.7-2.4v3.2c0 1.3-3 2.4-6.7 2.4s-6.7-1.1-6.7-2.4z"/>
<path d="M1826.5 983.4c0 1.3 3 2.4 6.7 2.4s6.7-1.1 6.7-2.4v3.2c0 1.3-3 2.4-6.7 2.4s-6.7-1.1-6.7-2.4z"/>
<path d="M1826.5 988.5c0 1.3 3 2.4 6.7 2.4h2v1.6c-.6.1-1.3.1-2 .1-3.7 0-6.7-1.1-6.7-2.4z"/>
<circle cx="1841.4" cy="989.1" r="5.6"/>
<ellipse cx="1878.2" cy="976" rx="6.7" ry="2.1"/>
<path d="M1871.5 978.3c0 1.3 3 2.4 6.7 2.4s6.7-1.1 6.7-2.4v3.2c0 1.3-3 2.4-6.7 2.4s-6.7-1.1-6.7-2.4z"/>
<path d="M1871.5 983.4c0 1.3 3 2.4 6.7 2.4s6.7-1.1 6.7-2.4v3.2c0 1.3-3 2.4-6.7 2.4s-6.7-1.1-6.7-2.4z"/>
<path d="M1871.5 988.5c0 1.3 3 2.4 6.7 2.4h2v1.6c-.6.1-1.3.1-2 .1-3.7 0-6.7-1.1-6.7-2.4z"/>
<circle cx="1886.2" cy="989.1" r="5.6"/>
</g>
<circle cx="1841.4" cy="989.1" r="6.2" stroke="#fff" stroke-width="1"/>
<circle cx="1886.2" cy="989.1" r="6.2" stroke="#fff" stroke-width="1"/>
<path d="M1841.4 985.8v5.5M1839 989l2.4 2.6 2.4-2.6" stroke="#fff" stroke-width="1.3"/>
<path d="M1886.2 992.4v-5.5M1883.8 989.2l2.4-2.6 2.4 2.6" stroke="#fff" stroke-width="1.3"/>
</svg>

<div class='a' style='left:368px;top:166px;width:1180px;height:680px;background:#fff;border:1px solid #a3a3a3;box-shadow:0 3px 18px rgba(0,0,0,0.15)'></div>
<div class='a' style='left:369px;top:167px;width:1178px;height:35px;background:#0d663a;'></div>
<div class='a nw' style='left:379.50px;top:169.72px;font-size:16.5px;line-height:33.0px;font-weight:400;color:#fff;transform:scaleX(0.9521);transform-origin:0 0;'>216363 | Addison Bailey | addison@example.com | M695142042-2</div>
<div class='a' style='left:1517px;top:175px;width:20px;height:20px;background:#e85055;border-radius:3px'></div>
<div class='a' style='left:381px;top:209px;width:75px;height:36px;background:#2a2624;border-radius:5px 5px 0 0'></div>
<div class='a nw' style='left:393.10px;top:212.95px;font-size:15px;line-height:30px;font-weight:400;color:#fff;transform:scaleX(0.9518);transform-origin:0 0;'>General</div>
<div class='a' style='left:461px;top:209px;width:75px;height:36px;background:#2a2624;border-radius:5px 5px 0 0'></div>
<div class='a nw' style='left:470.50px;top:212.95px;font-size:15px;line-height:30px;font-weight:400;color:#fff;transform:scaleX(0.9459);transform-origin:0 0;'>Payment</div>
<div class='a' style='left:541px;top:209px;width:100px;height:36px;background:#2a2624;border-radius:5px 5px 0 0'></div>
<div class='a nw' style='left:550.00px;top:212.95px;font-size:15px;line-height:30px;font-weight:400;color:#fff;transform:scaleX(0.9936);transform-origin:0 0;'>Membership</div>
<div class='a' style='left:646px;top:209px;width:125px;height:36px;background:#2a2624;border-radius:5px 5px 0 0'></div>
<div class='a nw' style='left:659.20px;top:212.95px;font-size:15px;line-height:30px;font-weight:400;color:#fff;transform:scaleX(0.9855);transform-origin:0 0;'>Playing History</div>
<div class='a' style='left:776px;top:209px;width:125px;height:36px;background:#2a2624;border-radius:5px 5px 0 0'></div>
<div class='a nw' style='left:783.50px;top:212.95px;font-size:15px;line-height:30px;font-weight:400;color:#fff;transform:scaleX(0.9631);transform-origin:0 0;'>Purchase History</div>
<div class='a' style='left:906px;top:209px;width:75px;height:36px;background:#2a2624;border-radius:5px 5px 0 0'></div>
<div class='a nw' style='left:914.32px;top:212.95px;font-size:15px;line-height:30px;font-weight:400;color:#fff;'>Discount</div>
<div class='a' style='left:986px;top:209px;width:115px;height:36px;background:#2a2624;border-radius:5px 5px 0 0'></div>
<div class='a nw' style='left:994.31px;top:212.95px;font-size:15px;line-height:30px;font-weight:400;color:#fff;'>Loyalty History</div>
<div class='a' style='left:1106px;top:209px;width:65px;height:36px;background:#0d663a;border-radius:5px 5px 0 0'></div>
<div class='a nw' style='left:1118.49px;top:212.95px;font-size:15px;line-height:30px;font-weight:400;color:#fff;'>Cards</div>
<div class='a' style='left:1174px;top:209px;width:77px;height:36px;background:#2a2624;border-radius:5px 5px 0 0'></div>
<div class='a nw' style='left:1182.06px;top:212.95px;font-size:15px;line-height:30px;font-weight:400;color:#fff;'>Message</div>
<div class='a' style='left:1254px;top:209px;width:117px;height:36px;background:#2a2624;border-radius:5px 5px 0 0'></div>
<div class='a nw' style='left:1265.82px;top:212.95px;font-size:15px;line-height:30px;font-weight:400;color:#fff;'>Customer File</div>
<div class='a' style='left:1374px;top:209px;width:67px;height:36px;background:#2a2624;border-radius:5px 5px 0 0'></div>
<div class='a nw' style='left:1387.91px;top:212.95px;font-size:15px;line-height:30px;font-weight:400;color:#fff;'>Notes</div>
<div class='a' style='left:1444px;top:209px;width:87px;height:36px;background:#2a2624;border-radius:5px 5px 0 0'></div>
<div class='a nw' style='left:1452.06px;top:212.95px;font-size:15px;line-height:30px;font-weight:400;color:#fff;'>Addresses</div>
<div class='a' style='left:379px;top:244px;width:1158px;height:2px;background:#0d663a;'></div>
<div class='a' style='left:376px;top:248px;width:183px;height:41px;background:transparent;border:6px solid #ff1c1c'></div>
<div class='a nw' style='left:386.00px;top:254.43px;font-size:14.5px;line-height:29.0px;font-weight:700;color:#1d2270;transform:scaleX(0.9140);transform-origin:0 0;'>GIFT/CREDIT VOUCHERS</div>
<div class='a' style='left:386px;top:278px;width:162px;height:1px;background:#1d2270;'></div>
<div class='a nw' style='left:566.80px;top:254.43px;font-size:14.5px;line-height:29.0px;font-weight:700;color:#7d8cb4;transform:scaleX(0.9115);transform-origin:0 0;'>PUNCHCARDS</div>
<div class='a' style='left:672px;top:264px;width:1.4px;height:14px;background:#7d8cb4;'></div>
<div class='a nw' style='left:681.80px;top:254.43px;font-size:14.5px;line-height:29.0px;font-weight:700;color:#7d8cb4;transform:scaleX(0.9269);transform-origin:0 0;'>AWARDS</div>
<div class='a' style='left:381px;top:290px;width:1154px;height:2px;background:#d4d4d4;'></div>
<div class='a' style='left:381px;top:335px;width:1154px;height:503px;background:#ebeae8;border-top:2px solid #d0d0d0'></div>
<div class='a' style='left:381px;top:337px;width:1154px;height:1px;background:#fafafa;'></div>
<div class='a' style='left:381px;top:370px;width:1154px;height:2px;background:#d0d0d0;'></div>
<div class='a nw' style='left:391.00px;top:339.75px;font-size:15px;line-height:30px;font-weight:400;color:#666;transform:scaleX(0.9908);transform-origin:0 0;'>Gift/Credit Vouchers</div>
<div class='a' style='left:391px;top:423px;width:1134px;height:300px;background:#fff;border:1px solid #8aa0bb'></div>
<div class='a' style='left:392px;top:424px;width:1132px;height:30px;background:#808080;'></div>
<div class='a' style='left:579.5px;top:424px;width:1.6px;height:30px;background:#c4c4c4;'></div>
<div class='a' style='left:768.5px;top:424px;width:1.6px;height:30px;background:#c4c4c4;'></div>
<div class='a' style='left:957px;top:424px;width:1.6px;height:30px;background:#c4c4c4;'></div>
<div class='a' style='left:1145.5px;top:424px;width:1.6px;height:30px;background:#c4c4c4;'></div>
<div class='a' style='left:1334px;top:424px;width:1.6px;height:30px;background:#c4c4c4;'></div>
<div class='a nw' style='left:463.75px;top:428.02px;font-size:12.8px;line-height:25.6px;font-weight:400;color:#fff;transform:scaleX(0.9667);transform-origin:0 0;'>Number</div>
<div class='a nw' style='left:661.50px;top:428.02px;font-size:12.8px;line-height:25.6px;font-weight:400;color:#fff;transform:scaleX(0.9009);transform-origin:0 0;'>Type</div>
<div class='a nw' style='left:827.00px;top:428.02px;font-size:12.8px;line-height:25.6px;font-weight:400;color:#fff;transform:scaleX(0.9220);transform-origin:0 0;'>Voucher Date</div>
<div class='a nw' style='left:1011.25px;top:428.02px;font-size:12.8px;line-height:25.6px;font-weight:400;color:#fff;transform:scaleX(0.9143);transform-origin:0 0;'>Expiration Date</div>
<div class='a nw' style='left:1223.75px;top:428.02px;font-size:12.8px;line-height:25.6px;font-weight:400;color:#fff;transform:scaleX(0.8820);transform-origin:0 0;'>Status</div>
<div class='a nw' style='left:1409.00px;top:428.02px;font-size:12.8px;line-height:25.6px;font-weight:400;color:#fff;transform:scaleX(0.8649);transform-origin:0 0;'>Balance</div>
<svg class="a" style="left:1517px;top:175px" width="20" height="20" viewBox="0 0 20 20">
<path d="M4.2 4.3l11.6 11.5M15.8 4.3L4.2 15.8" stroke="#fff" stroke-width="1.6"/>
</svg>

</body></html>
